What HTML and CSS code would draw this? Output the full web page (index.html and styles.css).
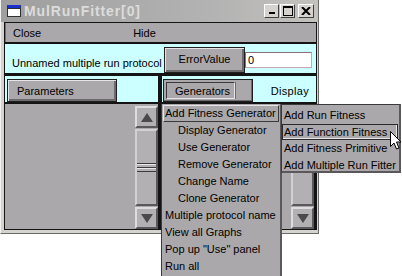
FILE: index.html
```html
<!doctype html>
<html lang="en">
  <head>
    <meta charset="UTF-8" />
    <title>MulRunFitter[0]</title>
    <link rel="stylesheet" href="styles.css">
  </head>
  <body>
    <div class="window">
      <div class="titlebar">
        <span class="title-icon"></span>
        <span class="title">MulRunFitter[0]</span>
        <div class="title-buttons">
          <span class="tb tb-min"><svg width="8" height="8" viewBox="0 0 8 8"><rect x="1" y="5" width="6" height="2" fill="#000"/></svg></span>
          <span class="tb tb-max"><svg width="10" height="10" viewBox="0 0 10 10"><rect x="0.5" y="0.5" width="9" height="9" fill="none" stroke="#000"/><rect x="0" y="0" width="10" height="2" fill="#000"/></svg></span>
          <span class="tb tb-close"><svg width="10" height="8" viewBox="0 0 10 8"><path d="M1 0 L9 8 M9 0 L1 8" stroke="#000" stroke-width="2"/></svg></span>
        </div>
      </div>

      <div class="client">
        <div class="menubar">
          <span class="menu-item">Close</span>
          <span class="menu-item menu-hide">Hide</span>
        </div>

        <div class="row row-name">
          <span class="proto-name">Unnamed multiple run protocol</span>
          <span class="btn btn-error">ErrorValue</span>
          <span class="value-field">0</span>
        </div>

        <div class="row row-actions">
          <div class="cell cell-left">
            <span class="btn btn-params">Parameters</span>
          </div>
          <div class="cell cell-right">
            <span class="menubtn">
              <span class="menubtn-label">Generators</span>
              <span class="menubtn-tail"></span>
            </span>
            <span class="display-label">Display</span>
          </div>
        </div>

        <div class="lists">
          <div class="pane pane-left">
            <div class="list-body"></div>
            <div class="scrollbar">
              <span class="sb-btn"><svg width="12" height="9" viewBox="0 0 12 9"><path d="M6 0 L12 9 L0 9 Z" fill="#4a4a4a"/></svg></span>
              <span class="sb-thumb"><span class="grip"></span></span>
              <span class="sb-btn"><svg width="12" height="9" viewBox="0 0 12 9"><path d="M0 0 L12 0 L6 9 Z" fill="#4a4a4a"/></svg></span>
            </div>
          </div>
          <div class="pane pane-right">
            <div class="list-body"></div>
            <div class="scrollbar">
              <span class="sb-btn"><svg width="12" height="9" viewBox="0 0 12 9"><path d="M6 0 L12 9 L0 9 Z" fill="#4a4a4a"/></svg></span>
              <span class="sb-thumb"><span class="grip"></span></span>
              <span class="sb-btn"><svg width="12" height="9" viewBox="0 0 12 9"><path d="M0 0 L12 0 L6 9 Z" fill="#4a4a4a"/></svg></span>
            </div>
          </div>
        </div>
      </div>
    </div>

    <!-- Generators popup, opened over the window -->
    <ul class="popup popup-main">
      <li class="active">Add Fitness Generator</li>
      <li class="indent">Display Generator</li>
      <li class="indent">Use Generator</li>
      <li class="indent">Remove Generator</li>
      <li class="indent">Change Name</li>
      <li class="indent">Clone Generator</li>
      <li>Multiple protocol name</li>
      <li>View all Graphs</li>
      <li>Pop up "Use" panel</li>
      <li>Run all</li>
    </ul>

    <ul class="popup popup-sub">
      <li>Add Run Fitness</li>
      <li class="hover">Add Function Fitness</li>
      <li>Add Fitness Primitive</li>
      <li>Add Multiple Run Fitter</li>
    </ul>

    <svg class="cursor" width="12" height="20" viewBox="0 0 12 20">
      <path d="M0.5 0.5 L0.5 15.5 L4 12 L6.5 18 L9 17 L6.5 11 L11 11 Z" fill="#fff" stroke="#000" stroke-width="1"/>
    </svg>
  </body>
</html>
```

FILE: styles.css
```css
:root {
  --frame: #d6d3ce;
  --face: #aaa8aa;
  --btn-face: #b2b0b2;
  --cyan: #ccffff;
  --ink: #000000;
  --edge-light: #e6e4e6;
  --rule: #141414;
}

* {
  box-sizing: border-box;
}

body {
  margin: 0;
  width: 402px;
  height: 276px;
  overflow: hidden;
  position: relative;
  background: #ffffff;
  font-family: "Liberation Sans", Arial, sans-serif;
  font-size: 11px;
  color: var(--ink);
}

/* window frame */
.window {
  width: 319px;
  height: 234px;
  display: flex;
  flex-direction: column;
  background: var(--frame);
  border-left: 1px solid #f2f2f2;
  border-right: 1px solid #6a6a6a;
  border-bottom: 1px solid #6a6a6a;
  padding-bottom: 3px;
}

.titlebar {
  height: 22px;
  flex: none;
  display: flex;
  align-items: center;
  padding: 0 4px 0 6px;
  background: linear-gradient(90deg, #9e9e9e, #b4b4b4 70%, #c4c2be);
}

.title-icon {
  width: 14px;
  height: 12px;
  background: #ffffff;
  border: 1px solid #303030;
  border-top: 3px solid #1a2fd0;
  box-shadow: inset 0 1px 0 #303030;
}

.title {
  margin-left: 3px;
  font-size: 14px;
  font-weight: bold;
  color: #dcdcdc;
  letter-spacing: 0.9px;
}

.title-buttons {
  margin-left: auto;
  display: flex;
  gap: 1px;
}

.tb {
  width: 15px;
  height: 14px;
  display: flex;
  align-items: center;
  justify-content: center;
  background: #d6d3ce;
  border: 1px solid;
  border-color: #ffffff #404040 #404040 #ffffff;
}

.tb-close {
  margin-left: 2px;
  width: 16px;
}

/* client area */
.client {
  flex: 1;
  margin: 0 1px 0 3px;
  border: 1px solid var(--rule);
  display: flex;
  flex-direction: column;
  background: var(--rule);
}

.menubar {
  height: 19px;
  flex: none;
  display: flex;
  align-items: center;
  padding-left: 7px;
  background: var(--face);
  border-left: 1px solid #707070;
  margin-bottom: 2px;
}

.menu-hide {
  margin-left: 92px;
}

.row {
  flex: none;
  display: flex;
}

.row-name {
  height: 29px;
  background: var(--cyan);
  padding: 3px 0 0 7px;
  margin-bottom: 3px;
  align-items: flex-start;
}

.proto-name {
  width: 152px;
  margin-top: 10px;
  white-space: nowrap;
}

.btn {
  display: flex;
  align-items: center;
  justify-content: center;
  background: var(--face);
  border: 1px solid #202020;
  box-shadow: inset 1px 1px 0 var(--edge-light), inset -2px -2px 0 #6c6a6c;
}

.btn-error {
  width: 81px;
  height: 26px;
  padding-bottom: 2px;
}

.value-field {
  width: 67px;
  height: 16px;
  margin-top: 5px;
  padding-left: 2px;
  line-height: 14px;
  background: #ffffff;
  border: 1px solid #c8a8ac;
  border-top-color: #8c7074;
  border-left-color: #8c7074;
}

.row-actions {
  height: 26px;
  gap: 4px;
  margin-bottom: 2px;
}

.cell {
  background: var(--cyan);
  display: flex;
  align-items: flex-start;
  padding-top: 3px;
}

.cell-left {
  width: 153px;
  padding-left: 2px;
}

.cell-right {
  flex: 1;
  padding-left: 1px;
  padding-right: 7px;
}

.btn-params {
  width: 110px;
  height: 23px;
  justify-content: flex-start;
  padding-left: 9px;
}

.menubtn {
  width: 90px;
  height: 23px;
  display: flex;
  padding: 2px;
  background: var(--face);
  border: 1px solid #202020;
  box-shadow: inset -1px -1px 0 #6c6a6c;
}

.menubtn-label {
  width: 69px;
  display: flex;
  align-items: center;
  padding-left: 8px;
  border: 1px solid;
  border-color: #3a3a3a var(--edge-light) var(--edge-light) #3a3a3a;
}

.menubtn-tail {
  flex: 1;
  border-left: 1px solid #6c6a6c;
}

.display-label {
  margin-left: auto;
  margin-top: 6px;
  letter-spacing: 0.3px;
}

/* list panes */
.lists {
  flex: 1;
  display: flex;
  gap: 4px;
}

.pane {
  display: flex;
  background: var(--face);
}

.pane-left {
  width: 153px;
}

.pane-right {
  width: 152px;
}

.list-body {
  flex: 1;
}

.scrollbar {
  width: 23px;
  display: flex;
  flex-direction: column;
  gap: 1px;
  padding-top: 2px;
}

.sb-btn {
  height: 22px;
  display: flex;
  align-items: center;
  justify-content: center;
  background: var(--btn-face);
  border: 2px solid;
  border-color: #dedcde #5a585a #5a585a #dedcde;
}

.sb-thumb {
  flex: 1;
  display: flex;
  align-items: center;
  background: var(--btn-face);
  border: 2px solid;
  border-color: #d2d0d2 #5a585a #5a585a #d2d0d2;
}

.grip {
  width: 100%;
  height: 9px;
  border-top: 1px solid #3c3c3c;
  border-bottom: 1px solid #3c3c3c;
  background: linear-gradient(#e8e8e8 0 1px, var(--btn-face) 1px 3px, #3c3c3c 3px 4px, #e8e8e8 4px 5px, var(--btn-face) 5px);
}

/* popup menus */
.popup {
  position: absolute;
  margin: 0;
  padding: 0;
  list-style: none;
  background: var(--face);
}

.popup li {
  white-space: nowrap;
  border: 1px solid transparent;
}

.popup-main {
  left: 161px;
  top: 104px;
  width: 121px;
  padding: 1px;
  border-left: 1px solid #3a3a3a;
  border-right: 2px solid #5a585a;
  border-bottom: 2px solid #5a585a;
}

.popup-main li {
  height: 17px;
  line-height: 15px;
  padding-left: 1px;
}

.popup-main li.indent {
  padding-left: 14px;
}

.popup-main li.active {
  border-color: var(--edge-light) #3a3a3a #3a3a3a var(--edge-light);
}

.popup-sub {
  left: 281px;
  top: 104px;
  width: 120px;
  height: 69px;
  padding: 2px 1px 0 0;
  border: 1px solid #3a3a3a;
  border-right: 2px solid #5a585a;
  border-bottom: 2px solid #5a585a;
}

.popup-sub li {
  height: 16.5px;
  line-height: 14.5px;
  padding-left: 1px;
}

.popup-sub li.hover {
  border-color: #2a2a2a;
  box-shadow: inset -1px -1px 0 var(--edge-light);
}

.cursor {
  position: absolute;
  left: 390px;
  top: 131px;
}
```
